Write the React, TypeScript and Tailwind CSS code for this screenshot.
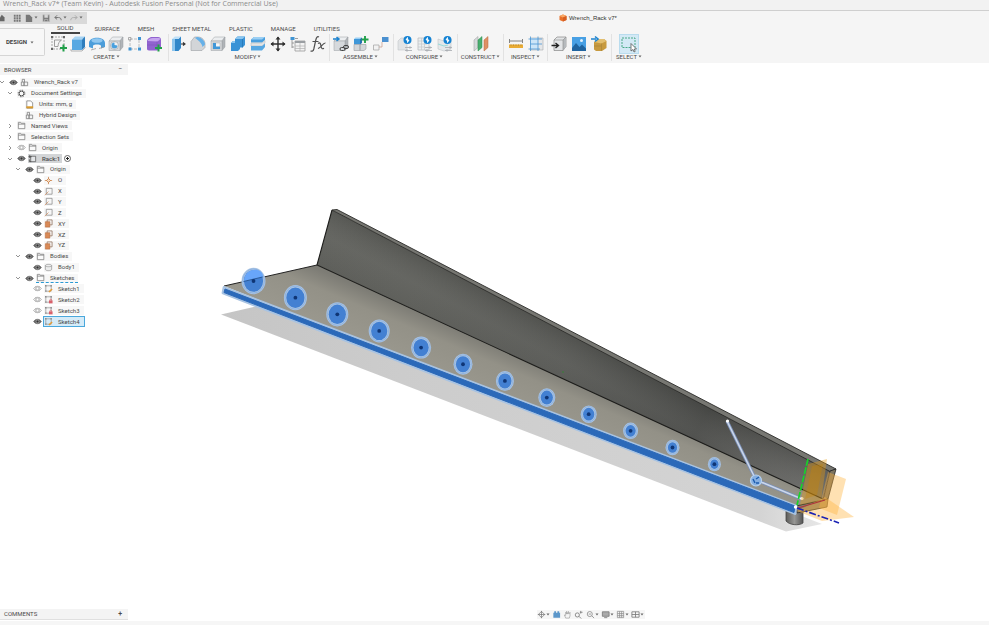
import type { ReactNode } from 'react';

type Tool = { label: string; art: ReactNode; active?: boolean };
type Group = { name: string; width: string; gap: string; tools: Tool[] };

const plusBadge = <path d="M13.5 9.5v7M10 13h7" stroke="#22a04a" strokeWidth="2" />;
const cubeGrey = (
  <g stroke="#9a9ea2" strokeWidth=".5">
    <path d="M2 6l3.500-4H16l-3 4z" fill="#eceef0" />
    <path d="M13 6l3-4v10l-3 3.500z" fill="#b0b4b8" />
    <path d="M2 6h11v9.500H2z" fill="#d6d9dc" />
  </g>
);
const bolt = (
  <g>
    <circle cx="11.500" cy="5" r="4" fill="#1583d3" />
    <path d="M11.500 2.500l-1.500 2.500h3l-1.500 2.500z" fill="#fff" stroke="#fff" strokeWidth=".8" />
  </g>
);
const sliders = (
  <path d="M9 12.500h7M9 15.500h7M14 11.200v2.600M11 14.200v2.600" stroke="#a6aaae" strokeWidth=".8" />
);

const groups: Group[] = [
  {
    name: 'CREATE',
    width: 'w-[120px] pr-1',
    gap: 'gap-px',
    tools: [
      {
        label: 'Create Sketch',
        art: (
          <g fill="none">
            <path d="M2 2h12v12H2z" stroke="#888" strokeWidth=".7" strokeDasharray="2 1" />
            <path d="M4.500 5h7c-2 1-3.500 3.500-3.500 6.500H4.500z" stroke="#888" strokeWidth=".8" />
            <path d="M1 1h2v2H1zM13 1h2v2h-2zM1 13h2v2H1z" fill="#666" />
            {plusBadge}
          </g>
        ),
      },
      {
        label: 'Extrude',
        art: (
          <g>
            <path d="M3 4.500L6 1.500h10l-3 3z" fill="#a6d3f3" />
            <path d="M3 4.500h10V15H3z" fill="#58a8e2" />
            <path d="M13 4.500l3-3V12l-3 3z" fill="#2d7dbd" />
            <path d="M2 14v2h11l3.500-3.500" fill="none" stroke="#999" strokeWidth=".7" />
          </g>
        ),
      },
      {
        label: 'Revolve',
        art: (
          <g>
            <path d="M1 8c0-7 16-7 16 0v4l-4 1.500v-3c-1-1.500-7-1.500-8 0v3L1 12z" fill="#4b9dda" />
            <ellipse cx="9" cy="5.500" rx="5.500" ry="2.300" fill="#8fc7f0" />
            <path d="M3 15l5-1.500M11 13.500l5-1.500" stroke="#999" strokeWidth=".8" />
          </g>
        ),
      },
      {
        label: 'Hole',
        art: (
          <g>
            {cubeGrey}
            <circle cx="7.500" cy="10.500" r="4" fill="#f0f1f2" stroke="#999" strokeWidth=".6" />
            <path d="M7.500 7.500a3 3 0 1 0 3 3l-3-.500z" fill="#4aa0dd" />
          </g>
        ),
      },
      {
        label: 'Rectangular Pattern',
        art: (
          <g>
            <path d="M4 4h9M4 4v9M13 5v8M4 14h8" stroke="#a9adb1" strokeWidth=".8" strokeDasharray="3 1" />
            <path d="M2.500 2.500h2.500V5H2.500z" fill="none" stroke="#999" strokeWidth=".8" />
            <path d="M12 2h3v3h-3zM2.500 12.500h3v3h-3zM12 12.500h3v3h-3z" fill="#3f94d3" />
          </g>
        ),
      },
      {
        label: 'Create Form',
        art: (
          <g>
            <path d="M2 6c0-2 3-4 5-4h6c2 0 3 1 3 3v7c-1 2-3 3.500-5 3.500H4c-1.500 0-2-1-2-2z" fill="#9163cf" />
            <path d="M2.500 6c1-2 3-3 5-3h6c1 0 1.500.500 2 1l-3 2.500z" fill="#c5a4ee" />
            <path d="M2 10h10M12 6.500v9" stroke="#7b52b6" strokeWidth=".5" />
            {plusBadge}
          </g>
        ),
      },
    ],
  },
  {
    name: 'MODIFY',
    width: 'w-[161px] pr-[2px]',
    gap: 'gap-[2px]',
    tools: [
      {
        label: 'Press Pull',
        art: (
          <g>
            <path d="M3 4l3-2.500h6L9 4z" fill="#bfe0f7" />
            <path d="M3 4h3v12H3z" fill="#8cc5ee" />
            <path d="M6 4h3.500v12H6zM9.500 4L12 1.500v11.500L9.500 16z" fill="#2f86c9" />
            <path d="M12 9h4M14 7.500L16 9l-2 1.500" fill="none" stroke="#333" strokeWidth="1.100" />
          </g>
        ),
      },
      {
        label: 'Fillet',
        art: (
          <g>
            <path d="M2 15.500v-9L5.500 2H9c4 0 7 3.500 7 7v3.500l-3 3z" fill="#d2d5d8" stroke="#9a9ea2" strokeWidth=".6" />
            <path d="M6 3C8 1.500 9.500 2 11 2.700c3 1.500 5 4 5 6.800L13.500 12C13 8 9 5 6 3z" fill="#65b0e8" />
          </g>
        ),
      },
      {
        label: 'Shell',
        art: (
          <g>
            {cubeGrey}
            <path d="M4 8h7v6H4z" fill="#f5f6f7" stroke="#aaa" strokeWidth=".5" />
            <path d="M4 8h3v3.500h4V14H4z" fill="#3f97d8" />
          </g>
        ),
      },
      {
        label: 'Combine',
        art: (
          <g>
            <path d="M6 4l2.500-2.500H16V10l-2.500 2.500H11V14L9 16H2V8l2-2h2z" fill="#3a93d6" />
            <path d="M6 4l2.500-2.500H16L13.500 4zM2 8l2-2h2v2z" fill="#8cc6f0" />
            <path d="M13.500 4v8.500" stroke="#2372b0" strokeWidth=".7" />
          </g>
        ),
      },
      {
        label: 'Split Body',
        art: (
          <g>
            <path d="M2 4.500L5 2h11v3l-3 2.500H2z" fill="#4a9fde" />
            <path d="M2 4.500L5 2h11l-3 2.500z" fill="#9bcff3" />
            <path d="M2 8h11l3-2.500V8l-3 3H2z" fill="#e3e5e7" stroke="#aaa" strokeWidth=".4" />
            <path d="M2 11h11l3-2.500V12l-3 3.500H2z" fill="#58a8e2" />
          </g>
        ),
      },
      {
        label: 'Move/Copy',
        art: (
          <g fill="#2f2f2f">
            <path d="M9 2v14M2 9h14" stroke="#2f2f2f" strokeWidth="1.400" />
            <path d="M9 1.500l2.500 3h-5zM9 16.500l2.500-3h-5zM1.500 9l3-2.500v5zM16.500 9l-3-2.500v5z" />
          </g>
        ),
      },
      {
        label: 'Parameters table',
        art: (
          <g>
            <path d="M1.500 2h4v3h-4z" fill="#3f94d3" />
            <path d="M3 5v8M3 8h2M3 12h2M6 3.500h3" stroke="#888" strokeWidth=".8" />
            <path d="M6 6h10v10H6z" fill="#f3f3f3" stroke="#999" strokeWidth=".8" />
            <path d="M6 6h10v2H6z" fill="#9a9ea2" />
            <path d="M6 11h10M6 13.500h10M11 8v8" stroke="#b0b0b0" strokeWidth=".7" />
          </g>
        ),
      },
      {
        label: 'Change Parameters',
        art: (
          <g fill="none" stroke="#505050" strokeWidth="1.200">
            <path d="M10 2C8 1 7.300 3 6.800 5L4.800 14c-.500 2-1.500 2.500-3.300 2M3.500 6.500h6" />
            <path d="M9 8.500c2-1.500 2.500 0 3 2.500s1.200 3.500 3 2.200M16.500 8c-2.500-.500-5.500 6-7.500 5.300" />
          </g>
        ),
      },
    ],
  },
  {
    name: 'ASSEMBLE',
    width: 'w-[64px] pr-[2px]',
    gap: 'gap-[2px]',
    tools: [
      {
        label: 'New Component',
        art: (
          <g>
            {cubeGrey}
            <path d="M1 4h5M4.500 2L7 4 4.500 6" fill="none" stroke="#1c83cf" strokeWidth="1.500" />
            <rect x="8" y="12.500" width="5" height="3" rx="1.500" fill="none" stroke="#444" />
            <rect x="11.500" y="10.500" width="5" height="3" rx="1.500" fill="none" stroke="#444" />
          </g>
        ),
      },
      {
        label: 'Joint component',
        art: (
          <g>
            <path d="M2 4l1.500-1.500H10L8 4z" fill="#9bcff3" />
            <path d="M2 4h6v5.500H2z" fill="#3f97d8" />
            <path d="M2 9.500h6v6H2zM8 9.500h6V14l-2 1.500H8z" fill="#d3d6d9" stroke="#9a9ea2" strokeWidth=".6" />
            <path d="M8 4l2-1.500v5.500L8 9.500z" fill="#2372b0" />
            <path d="M13 1v7M9.500 4.500h7" stroke="#22a04a" strokeWidth="1.900" />
          </g>
        ),
      },
      {
        label: 'Joint',
        art: (
          <g>
            <path d="M10 2h6.500v5H10z" fill="#4a90d0" />
            <path d="M1.500 10h5.500v5H1.500z" fill="#f2f2f2" stroke="#aaa" strokeWidth=".8" />
            <path d="M7 12h3V7" fill="none" stroke="#c79a86" strokeWidth=".7" />
          </g>
        ),
      },
    ],
  },
  {
    name: 'CONFIGURE',
    width: 'w-[64px] pr-[2px]',
    gap: 'gap-[2px]',
    tools: [
      {
        label: 'Configure Design',
        art: (
          <g>
            <path d="M2 6l3-3h6v12H2z" fill="#e2e4e6" stroke="#c3c6c9" strokeWidth=".6" />
            {sliders}
            {bolt}
          </g>
        ),
      },
      {
        label: 'Configuration Table',
        art: (
          <g>
            <path d="M2 3h11v12H2z" fill="#eceeef" stroke="#b4b8bc" strokeWidth=".7" />
            <path d="M2 6h9M2 9h9M2 12h7M5.500 3v12M8.500 6v9" stroke="#c4c8cb" strokeWidth=".7" />
            {sliders}
            {bolt}
          </g>
        ),
      },
      {
        label: 'Theme Table',
        art: (
          <g>
            <path d="M2 4l6 2 7-2v10l-7 2-6-2z" fill="#e4e8ea" stroke="#bfc4c8" strokeWidth=".6" />
            <path d="M2 9l6 2 4-1" fill="none" stroke="#9ddad9" strokeWidth="1.200" />
            {sliders}
            {bolt}
          </g>
        ),
      },
    ],
  },
  {
    name: 'CONSTRUCT',
    width: 'w-[46px]',
    gap: 'gap-0',
    tools: [
      {
        label: 'Offset Plane',
        art: (
          <g>
            <path d="M2 5l4-3.500v11L2 16z" fill="#d6d9dc" stroke="#999" strokeWidth=".5" />
            <path d="M6 5l4-3.500v11L6 16z" fill="#49ae6f" stroke="#2b8a4d" strokeWidth=".5" />
            <path d="M12 5l4-3.500v11L12 16z" fill="#de9065" stroke="#b9683b" strokeWidth=".5" />
          </g>
        ),
      },
    ],
  },
  {
    name: 'INSPECT',
    width: 'w-[44px]',
    gap: 'gap-[2px]',
    tools: [
      {
        label: 'Measure',
        art: (
          <g>
            <path d="M2.500 4v4M15.500 4v4M3 6h12" stroke="#777" strokeWidth=".9" />
            <path d="M2 9.500h14v3.500H2z" fill="#e9ac35" />
            <path d="M4 9.500v1M6.500 9.500v1M9 9.500v1M11.500 9.500v1M14 9.500v1" stroke="#916210" strokeWidth=".6" />
          </g>
        ),
      },
      {
        label: 'Section Analysis',
        art: (
          <g>
            <path d="M4 3h12v12H4z" fill="#e5e7e9" stroke="#a8acb0" strokeWidth=".6" />
            <path d="M3.500 3h7.500v11H3.500z" fill="#cce5f8" />
            <path d="M3.500 1.500V16M11 1.500V16M1.500 4H15M1.500 14H13M3.500 9H15" stroke="#4a96d2" strokeWidth=".8" />
          </g>
        ),
      },
    ],
  },
  {
    name: 'INSERT',
    width: 'w-[64px] pr-[2px]',
    gap: 'gap-[2px]',
    tools: [
      {
        label: 'Insert Derive',
        art: (
          <g>
            <path d="M4 5l3-3h9v9.500l-3 4H4z" fill="#e3e5e7" stroke="#888" strokeWidth=".7" />
            <path d="M13 5l3-3v9.500l-3 4z" fill="#b6babd" />
            <path d="M4 5h9v10.500M13 5l3-3" fill="none" stroke="#888" strokeWidth=".6" />
            <path d="M1.500 10.500h6M5.500 8l3 2.500-3 2.500" fill="none" stroke="#222" strokeWidth="1.400" />
          </g>
        ),
      },
      {
        label: 'Canvas',
        art: (
          <g>
            <path d="M2 2h14v14H2z" fill="#48a0e4" />
            <path d="M2 13l4-5 3.500 4L12 9.500l4 4V16H2z" fill="#20649f" />
            <circle cx="11.500" cy="5.500" r="1.500" fill="#e2f1fc" />
          </g>
        ),
      },
      {
        label: 'Insert McMaster-Carr Component',
        art: (
          <g>
            <path d="M4 7l5-3h5l2.500 2v7L12 16H6l-2-1.500z" fill="#c79a3f" />
            <path d="M4 7l5-3h5l2.500 2-5 2.500z" fill="#e2bf71" />
            <path d="M11.500 8.500V16M4 11h7" stroke="#a5823a" strokeWidth=".6" />
            <path d="M1 4h5M5 1.500L8 4 5 6.500" fill="none" stroke="#1c83cf" strokeWidth="1.600" />
          </g>
        ),
      },
    ],
  },
  {
    name: 'SELECT',
    width: 'w-[34px]',
    gap: 'gap-0',
    tools: [
      {
        label: 'Window Selection',
        active: true,
        art: (
          <g>
            <path d="M2 3h13v9.500H2z" fill="none" stroke="#3aa17a" strokeWidth=".9" strokeDasharray="2 1" />
            <path d="M11 8.500v7.500l2-1.500 1 2.500 1.200-.600-1-2.400h2.300z" fill="#fff" stroke="#444" strokeWidth=".7" />
          </g>
        ),
      },
    ],
  },
];

const workspaceTabs = ['SOLID', 'SURFACE', 'MESH', 'SHEET METAL', 'PLASTIC', 'MANAGE', 'UTILITIES'];

type NodeIcon =
  | 'component' | 'gear' | 'units' | 'folder' | 'rack' | 'origin' | 'axis' | 'plane' | 'body' | 'sketch' | 'locked';

type TreeNode = {
  label: string;
  level: number;
  icon: NodeIcon;
  arrow?: 'open' | 'closed';
  eye?: 'on' | 'off';
  state?: 'current' | 'selected' | 'editing';
};

const tree: TreeNode[] = [
  { label: 'Wrench_Rack v7', level: 0, icon: 'component', arrow: 'open', eye: 'on' },
  { label: 'Document Settings', level: 1, icon: 'gear', arrow: 'open' },
  { label: 'Units: mm, g', level: 2, icon: 'units' },
  { label: 'Hybrid Design', level: 2, icon: 'component' },
  { label: 'Named Views', level: 1, icon: 'folder', arrow: 'closed' },
  { label: 'Selection Sets', level: 1, icon: 'folder', arrow: 'closed' },
  { label: 'Origin', level: 1, icon: 'folder', arrow: 'closed', eye: 'off' },
  { label: 'Rack:1', level: 1, icon: 'rack', arrow: 'open', eye: 'on', state: 'current' },
  { label: 'Origin', level: 2, icon: 'folder', arrow: 'open', eye: 'on' },
  { label: 'O', level: 3, icon: 'origin', eye: 'on' },
  { label: 'X', level: 3, icon: 'axis', eye: 'on' },
  { label: 'Y', level: 3, icon: 'axis', eye: 'on' },
  { label: 'Z', level: 3, icon: 'axis', eye: 'on' },
  { label: 'XY', level: 3, icon: 'plane', eye: 'on' },
  { label: 'XZ', level: 3, icon: 'plane', eye: 'on' },
  { label: 'YZ', level: 3, icon: 'plane', eye: 'on' },
  { label: 'Bodies', level: 2, icon: 'folder', arrow: 'open', eye: 'on' },
  { label: 'Body1', level: 3, icon: 'body', eye: 'on' },
  { label: 'Sketches', level: 2, icon: 'folder', arrow: 'open', eye: 'on', state: 'editing' },
  { label: 'Sketch1', level: 3, icon: 'sketch', eye: 'off' },
  { label: 'Sketch2', level: 3, icon: 'locked', eye: 'off' },
  { label: 'Sketch3', level: 3, icon: 'locked', eye: 'off' },
  { label: 'Sketch4', level: 3, icon: 'sketch', eye: 'on', state: 'selected' },
];

const indents = ['pl-0', 'pl-2', 'pl-4', 'pl-6'];

const nodeArt: Record<NodeIcon, ReactNode> = {
  component: (
    <path d="M1.500 4.500h3v4h-3zM4.500 4.500h4v4h-4zM2.500 4.500v-3h2.500v3" fill="#f4f4f4" stroke="#777" strokeWidth=".8" />
  ),
  gear: (
    <g fill="none" stroke="#555">
      <circle cx="5" cy="5" r="2.600" strokeWidth="1.100" />
      <circle cx="5" cy="5" r="3.700" strokeWidth="1.100" strokeDasharray="1.500 1.400" />
    </g>
  ),
  units: (
    <g>
      <path d="M2 1h4l2.500 2v6H2z" fill="#fff" stroke="#777" strokeWidth=".8" />
      <path d="M1.500 7h7.500v2.300H1.500z" fill="#d99a2c" />
    </g>
  ),
  folder: <path d="M1.500 8.500v-7h2.500l.700 1h4v6zM1.500 3.500h7.200" fill="#fafafa" stroke="#777" strokeWidth=".8" />,
  rack: (
    <g>
      <path d="M3 2.500h5.500v6H3z" fill="#e3e5e7" stroke="#555" strokeWidth=".8" />
      <path d="M.500 3h3.500M2 1v3.500M1.500 6v2.500h2" fill="none" stroke="#444" strokeWidth=".9" />
    </g>
  ),
  origin: (
    <g>
      <path d="M5 1v8M1 5h8" stroke="#c9793c" strokeWidth=".8" />
      <path d="M5 2.800L7.200 5 5 7.200 2.800 5z" fill="#f6dcc4" stroke="#c9793c" strokeWidth=".9" />
    </g>
  ),
  axis: (
    <g>
      <path d="M2.500 1.500H9V8H2.500z" fill="#f7f7f7" stroke="#777" strokeWidth=".7" />
      <path d="M1 9l4-4" stroke="#d08a5a" strokeWidth=".8" />
    </g>
  ),
  plane: (
    <g>
      <path d="M3.500 1H9v5.500H3.500z" fill="#f4f4f4" stroke="#8a6a55" strokeWidth=".8" />
      <path d="M1.500 3h5v6h-5z" fill="#d98a57" stroke="#b4693a" strokeWidth=".6" />
    </g>
  ),
  body: (
    <path d="M1.500 3c0-2 7-2 7 0v4c0 2-7 2-7 0zM1.500 3c0 1.500 7 1.500 7 0" fill="#eceded" stroke="#888" strokeWidth=".7" />
  ),
  sketch: (
    <g>
      <path d="M2 2h6v6H2z" fill="none" stroke="#888" strokeWidth=".7" />
      <path d="M1.200 1.200h1.500v1.500H1.200zM7.200 1.200h1.500v1.500H7.200zM1.200 7.200h1.500v1.500H1.200z" fill="#888" />
      <path d="M5.500 9L9 5.500" stroke="#e59a33" strokeWidth="1.600" />
    </g>
  ),
  locked: (
    <g>
      <path d="M2 2h6v6H2z" fill="none" stroke="#888" strokeWidth=".7" />
      <path d="M1.200 1.200h1.500v1.500H1.200zM7.200 1.200h1.500v1.500H7.200zM1.200 7.200h1.500v1.500H1.200z" fill="#888" />
      <path d="M5.500 6h4v3.300h-4z" fill="#d8606a" />
      <path d="M6.500 6c0-2 2-2 2 0" fill="none" stroke="#d8606a" strokeWidth=".8" />
    </g>
  ),
};

function Eye({ on }: { on: boolean }) {
  return (
    <svg viewBox="0 0 9 7" className="h-[7px] w-[9px]" aria-hidden="true">
      <path
        d="M.700 3.500C2.500.600 6.500.600 8.300 3.500 6.500 6.400 2.500 6.400.700 3.500z"
        fill={on ? '#666' : '#fff'}
        stroke={on ? '#666' : '#999'}
        strokeWidth=".8"
      />
      <circle cx="4.500" cy="3.500" r="1.400" fill={on ? '#333' : '#fff'} stroke={on ? '#bbb' : '#999'} strokeWidth=".6" />
      {!on && <path d="M2.700 1.200v4.600M6.300 1.200v4.600" stroke="#aaa" strokeWidth=".6" />}
    </svg>
  );
}

function TreeRow({ node }: { node: TreeNode }) {
  const label = {
    current: 'bg-[#d3d5d7] pr-[2px]',
    selected: 'bg-[#d5ebf8] outline outline-1 outline-[#4aa8dc] pr-1',
    editing: 'border-b border-dashed border-[#2a9ad4] bg-[#f7f7f7] pr-1',
    none: 'bg-[#f7f7f7] pr-1',
  }[node.state ?? 'none'];

  return (
    <li className={`flex items-center ${indents[node.level]}`}>
      <button className="mr-[5px] flex h-2 w-1 shrink-0 items-center justify-center" aria-label={`Toggle ${node.label}`} disabled={!node.arrow}>
        {node.arrow && (
          <svg viewBox="0 0 6 6" className={`h-[6px] w-[6px] shrink-0 ${node.arrow === 'closed' ? '-rotate-90' : ''}`} aria-hidden="true">
            <path d="M1 2l2 2 2-2" fill="none" stroke="#777" strokeWidth=".8" />
          </svg>
        )}
      </button>
      {node.eye && (
        <button className="mr-[2px] flex w-[9px] shrink-0 items-center" aria-label={`Visibility of ${node.label}`}>
          <Eye on={node.eye === 'on'} />
        </button>
      )}
      <span className={`flex h-[9px] items-center gap-[5px] ${label}`}>
        <svg viewBox="0 0 10 10" className="h-[9px] w-[9px] shrink-0" aria-hidden="true">
          {nodeArt[node.icon]}
        </svg>
        <span className={node.state === 'current' ? 'font-medium' : ''}>{node.label}</span>
      </span>
      {node.state === 'current' && (
        <input type="radio" name="active-component" defaultChecked aria-label={`Activate ${node.label}`}
          className="ml-[2px] h-[7px] w-[7px] appearance-none rounded-full border border-[#666] bg-[radial-gradient(#222_35%,#fff_40%)]" />
      )}
    </li>
  );
}

// Sketch circles run along the plate, shrinking with perspective.
const holes = Array.from({ length: 12 }, (_, i) => ({
  cx: 253.5 + i * 41.9,
  cy: 281 + i * 16.65,
  r: 12 - i * 0.5,
}));

function Model() {
  return (
    <svg viewBox="128 63 861 546" className="h-full w-full" role="img" aria-label="Wrench rack model">
      <defs>
        <linearGradient id="wall" gradientUnits="userSpaceOnUse" x1="317" y1="215" x2="830" y2="490">
          <stop offset="0" stopColor="#63645f" />
          <stop offset=".2" stopColor="#62635e" />
          <stop offset=".5" stopColor="#5b5c58" />
          <stop offset=".75" stopColor="#4c4d4a" />
          <stop offset="1" stopColor="#72726f" />
        </linearGradient>
        <linearGradient id="wallShade" gradientUnits="userSpaceOnUse" x1="480" y1="284" x2="445" y2="350">
          <stop offset="0" stopColor="#30312f" stopOpacity=".3" />
          <stop offset=".4" stopColor="#777" stopOpacity=".15" />
          <stop offset="1" stopColor="#30312f" stopOpacity=".2" />
        </linearGradient>
        <linearGradient id="plate" gradientUnits="userSpaceOnUse" x1="520" y1="355" x2="500" y2="402">
          <stop offset="0" stopColor="#7d7c75" />
          <stop offset=".35" stopColor="#939187" />
          <stop offset="1" stopColor="#9a988e" />
        </linearGradient>
        <linearGradient id="shadow" gradientUnits="userSpaceOnUse" x1="221" y1="0" x2="820" y2="0">
          <stop offset="0" stopColor="#c5c5c5" />
          <stop offset=".3" stopColor="#cccccc" />
          <stop offset=".9" stopColor="#d4d4d4" />
          <stop offset="1" stopColor="#e6e6e6" />
        </linearGradient>
        <linearGradient id="peg" x1="0" x2="1">
          <stop offset="0" stopColor="#5c5c5a" />
          <stop offset=".5" stopColor="#969694" />
          <stop offset="1" stopColor="#555" />
        </linearGradient>
        <filter id="soft" x="-5%" y="-5%" width="110%" height="110%">
          <feGaussianBlur stdDeviation=".7" />
        </filter>
      </defs>

      <path d="M221 314.500L262 305l560 219-36 7.500z" fill="url(#shadow)" filter="url(#soft)" />

      <path d="M786 511v10c3 4 13 5 17 2v-13z" fill="url(#peg)" stroke="#444" strokeWidth=".8" />
      <path d="M224 286L317 265 827 499l-1 8-31 7z" fill="url(#plate)" />
      <path d="M224 286L317 265" stroke="#222" strokeWidth="1" />
      <path d="M332 210L830 471l-7 28L317 265z" fill="url(#wall)" />
      <path d="M332 210L830 471l-7 28L317 265z" fill="url(#wallShade)" />
      <path d="M332 210l5-.500L836 469l-6 2.500z" fill="#777772" />
      <path d="M332 210L830 471.500l6-2.500L337 209.500z" fill="none" stroke="#2a2a28" strokeWidth=".9" />
      <path d="M332 210L317 265l506 234" fill="none" stroke="#1d1d1b" strokeWidth="1.100" />
      <path d="M830 471l6-2-8 30-5 1z" fill="#7d7460" stroke="#222" strokeWidth=".8" />
      <path d="M797 513l-1-7 27-6 5-1-1 8z" fill="#8c8068" stroke="#222" strokeWidth=".8" />

      <path d="M224 287.500L796 506l-1 7.500L223 293z" fill="#a3c0e0" stroke="#a8c3e2" strokeWidth="2.800" strokeLinejoin="round" />
      <path d="M225 289L795 506l-1 6.500L224 292.500z" fill="#2b69b9" stroke="#2b69b9" strokeWidth="1" />

      {holes.map((hole, i) => (
        <g key={i}>
          <ellipse cx={hole.cx} cy={hole.cy} rx={hole.r} ry={hole.r * 1.1} fill="#a9c4e4" />
          <ellipse cx={hole.cx} cy={hole.cy} rx={hole.r - 1.1} ry={hole.r * 1.1 - 1.1} fill="none" stroke="#7fa8dc" strokeWidth=".6" />
          <ellipse cx={hole.cx} cy={hole.cy} rx={hole.r - 2.4} ry={hole.r * 1.1 - 2.4} fill="#4380d2" />
          {i === 0 && <path d="M244 281.500c0-14.500 19-15 19-4.500z" fill="#68a6fa" />}
          {i === 0 && <path d="M243.500 281.500l19-4.500" stroke="#25528f" strokeWidth=".9" />}
          <circle cx={hole.cx} cy={hole.cy} r="1.900" fill="#0f3575" />
        </g>
      ))}

      <circle cx="563" cy="372" r=".8" fill="#2f8a2f" />

      <path d="M727 421L756 480 802 499" fill="none" stroke="#7b90b8" strokeWidth="3.200" />
      <path d="M727 421L756 480 802 499" fill="none" stroke="#cbd7ea" strokeWidth="1.600" />
      <circle cx="756" cy="480.500" r="5.500" fill="#85afe2" stroke="#b7d1ee" strokeWidth="1.200" />
      <path d="M753 479l2 4M756 479l3-2M756 483h3" stroke="#1d5cae" strokeWidth="1.400" />
      <circle cx="727.500" cy="421" r="1.600" fill="#fff" />
      <circle cx="802" cy="498.500" r="1.600" fill="#fff" />

      <path d="M808 464l19-5-6 42-21 4z" fill="#e69a14" fillOpacity=".4" />
      <path d="M812 466l11-2-6 31-12 4z" fill="#c98400" fillOpacity=".35" />
      <path d="M828 472l18 7-9 36-18-7z" fill="#ffb53e" fillOpacity=".4" />
      <path d="M797 511l28-14 29 20-32 4z" fill="#ffb53e" fillOpacity=".4" />
      <path d="M798 508l27-8" stroke="#b0323a" strokeWidth="1.200" />
      <path d="M808 459l-11 46" stroke="#17d329" strokeWidth="1.700" strokeDasharray="7 1.500" />
      <path d="M797 508l42 15" stroke="#1b23b5" strokeWidth="1.600" strokeDasharray="7 2 2 2" />
      <circle cx="795.500" cy="507" r="1.700" fill="#fff" />
    </svg>
  );
}

const quickTools = [
  { label: 'Home', art: <path d="M0 5l2-3 3 3v4H0z" fill="#666" />, menu: false },
  { label: 'Data Panel', art: <path d="M2 2h2v2H2zM4.800 2h2v2h-2zM7.500 2h2v2h-2zM2 4.800h2v2H2zM4.800 4.800h2v2h-2zM7.500 4.800h2v2h-2zM2 7.500h2v2H2zM4.800 7.500h2v2h-2zM7.500 7.500h2v2h-2z" fill="#777" />, menu: false },
  { label: 'File', art: <path d="M2 2h4l3 3v5H2z" fill="#777" />, menu: true },
  { label: 'Save', art: <path d="M2 2h7.500v7.500H2zM4 2v3h3.500V2M4 9.500V7h3.500v2.500" fill="#777" stroke="#ccc" strokeWidth=".7" />, menu: false },
  { label: 'Undo', art: <path d="M4.500 2.500L2 5l2.500 2M2 5h4c2 0 3 1 3 3" fill="none" stroke="#777" strokeWidth="1.100" />, menu: true },
  { label: 'Redo', art: <path d="M6.500 2.500L9 5 6.500 7M9 5H5C3 5 2 6 2 8" fill="none" stroke="#aaa" strokeWidth="1" />, menu: true },
];

const navTools = [
  { label: 'Orbit', art: <path d="M5 1v8M1 5h8M5 1.500L8.500 5 5 8.500 1.500 5z" fill="none" stroke="#777" strokeWidth=".8" />, menu: true },
  { label: 'Look At', art: <path d="M1.500 3h7.500v5.500H1.500zM2.500 1.500h2V3h-2zM6 1.500h2V3H6z" fill="#5c97ca" />, menu: false },
  { label: 'Pan', art: <path d="M3 9L1.500 5.500l1.500.500V2.500l1 2v-3l1.200 3 .800-3 .500 3 1.300-2v4L7 9z" fill="#f5f5f5" stroke="#999" strokeWidth=".7" />, menu: false },
  { label: 'Zoom', art: <path d="M6 5.500a2.300 2.300 0 1 1-4.600 0 2.300 2.300 0 0 1 4.600 0zM5.500 7L8 9.500M7.500 1v3M6.500 2.500h3" fill="none" stroke="#777" strokeWidth=".9" />, menu: false },
  { label: 'Fit', art: <path d="M7 4.500a2.800 2.800 0 1 1-5.600 0 2.800 2.800 0 0 1 5.600 0zM6.500 6.500L9 9M3 4.500h2.500" fill="none" stroke="#888" strokeWidth=".9" />, menu: true },
  { label: 'Display Settings', art: <path d="M1.500 2h7.500v5H1.500zM3.500 8.500h3.500" fill="#aaa" stroke="#777" strokeWidth=".9" />, menu: true },
  { label: 'Grid and Snaps', art: <path d="M1.500 1.500h7v7h-7zM4 1.500v7M6.300 1.500v7M1.500 4h7M1.500 6.300h7" fill="none" stroke="#888" strokeWidth=".8" />, menu: true },
  { label: 'Viewports', art: <path d="M1 2h8v6H1zM5 2v6M1 5h8" fill="none" stroke="#777" strokeWidth=".9" />, menu: true },
];

function Caret() {
  return (
    <svg viewBox="0 0 4 3" className="h-[3px] w-1 shrink-0" aria-hidden="true">
      <path d="M.500.500h3L2 2.500z" fill="#666" />
    </svg>
  );
}

export default function App() {
  return (
    <div className="flex min-h-screen flex-col bg-white font-[Roboto,sans-serif] text-[6px] leading-none text-[#4a4a4a]">
      <header className="bg-[#f5f5f5]">
        <div className="h-[11px] border-b border-[#cfcfcf] bg-[#f2f2f2] pl-[3px]">
          <h1 className="font-['Open_Sans',sans-serif] text-[7px] leading-[7px] whitespace-nowrap text-[#8a8a8a]">
            Wrench_Rack v7* (Team Kevin) - Autodesk Fusion Personal (Not for Commercial Use)
          </h1>
        </div>

        <div className="flex h-[13px] items-center justify-between">
          <div className="flex h-3 w-[87px] items-center justify-between bg-[#d9d9d9] pr-1">
            {quickTools.map((tool) => (
              <button key={tool.label} aria-label={tool.label} className="flex items-center">
                <svg viewBox="0 0 11 11" className="h-[10px] w-[10px]" aria-hidden="true">{tool.art}</svg>
                {tool.menu && <Caret />}
              </button>
            ))}
          </div>
          <div className="flex flex-1 items-center justify-center gap-[2px] pl-[100px] font-['Liberation_Sans',sans-serif] text-[#333]">
            <svg viewBox="0 0 8 8" className="h-2 w-2" aria-hidden="true">
              <path d="M4 .500L7.500 2v4L4 7.500.500 6V2z" fill="#e8702a" />
              <path d="M4 .500L7.500 2 4 3.500.500 2z" fill="#f9a866" />
              <path d="M4 3.500L7.500 2v4L4 7.500z" fill="#d65f22" />
            </svg>
            Wrench_Rack v7*
          </div>
        </div>

        <div className="flex h-[39px]">
          <button className="mt-1 flex h-7 w-[45px] items-center justify-center gap-[3px] rounded-r-xs border border-l-0 border-[#d5d5d5] bg-[#f7f7f7] pr-1 font-bold text-[#444]">
            DESIGN <Caret />
          </button>
          <div className="flex flex-col pl-1">
            <nav className="flex h-[10px] gap-3 pl-[2px]">
              {workspaceTabs.map((tab, i) => (
                <button key={tab} className={`flex items-center ${i === 0 ? 'border-b-2 border-[#444] px-[6px]' : 'px-[3px]'}`}>
                  {tab}
                </button>
              ))}
            </nav>
            <div className="flex h-[27px]">
              {groups.map((group) => (
                <section key={group.name} className={`flex flex-col items-center border-r border-[#e2e2e2] last:border-r-0 ${group.width}`}>
                  <div className={`flex h-[19px] items-center ${group.gap}`}>
                    {group.tools.map((tool) => (
                      <button key={tool.label} aria-label={tool.label} className={tool.active ? 'bg-[#d3e9f5] outline outline-1 outline-[#b9dcee]' : ''}>
                        <svg viewBox="0 0 18 18" className="block h-[18px] w-[18px]" fill="none" aria-hidden="true">{tool.art}</svg>
                      </button>
                    ))}
                  </div>
                  <button className="flex h-[7px] items-center gap-px whitespace-nowrap">
                    {group.name} <Caret />
                  </button>
                </section>
              ))}
            </div>
          </div>
        </div>
      </header>

      <main className="flex flex-1">
        <aside className="w-32 shrink-0">
          <div className="mt-px flex h-[11px] items-center justify-between bg-[#f4f4f4] px-1">
            <h2>BROWSER</h2>
            <button aria-label="Collapse browser" className="pr-[2px] text-[7px]">−</button>
          </div>
          <ul className="mt-[2px] grid h-[250px] auto-rows-fr">
            {tree.map((node, i) => (
              <TreeRow key={i} node={node} />
            ))}
          </ul>
        </aside>
        <section className="min-w-0 flex-1">
          <Model />
        </section>
      </main>

      <footer className="border-b-4 border-[#f6f6f6]">
        <div className="mb-px flex h-[11px] items-center">
          <div className="flex h-[11px] w-32 shrink-0 items-center justify-between border-b border-[#e0e0e0] bg-[#f4f4f4] px-1">
            <h2>COMMENTS</h2>
            <button aria-label="Add comment" className="pr-[2px] text-[7px] font-bold">+</button>
          </div>
          <div className="flex flex-1 justify-center pl-16">
            <div className="flex w-[108px] items-center justify-between bg-[#f6f6f6]">
              {navTools.map((tool) => (
                <button key={tool.label} aria-label={tool.label} className="flex items-center">
                  <svg viewBox="0 0 10 10" className="h-[9px] w-[9px]" aria-hidden="true">{tool.art}</svg>
                  {tool.menu && <Caret />}
                </button>
              ))}
            </div>
          </div>
        </div>
      </footer>
    </div>
  );
}
